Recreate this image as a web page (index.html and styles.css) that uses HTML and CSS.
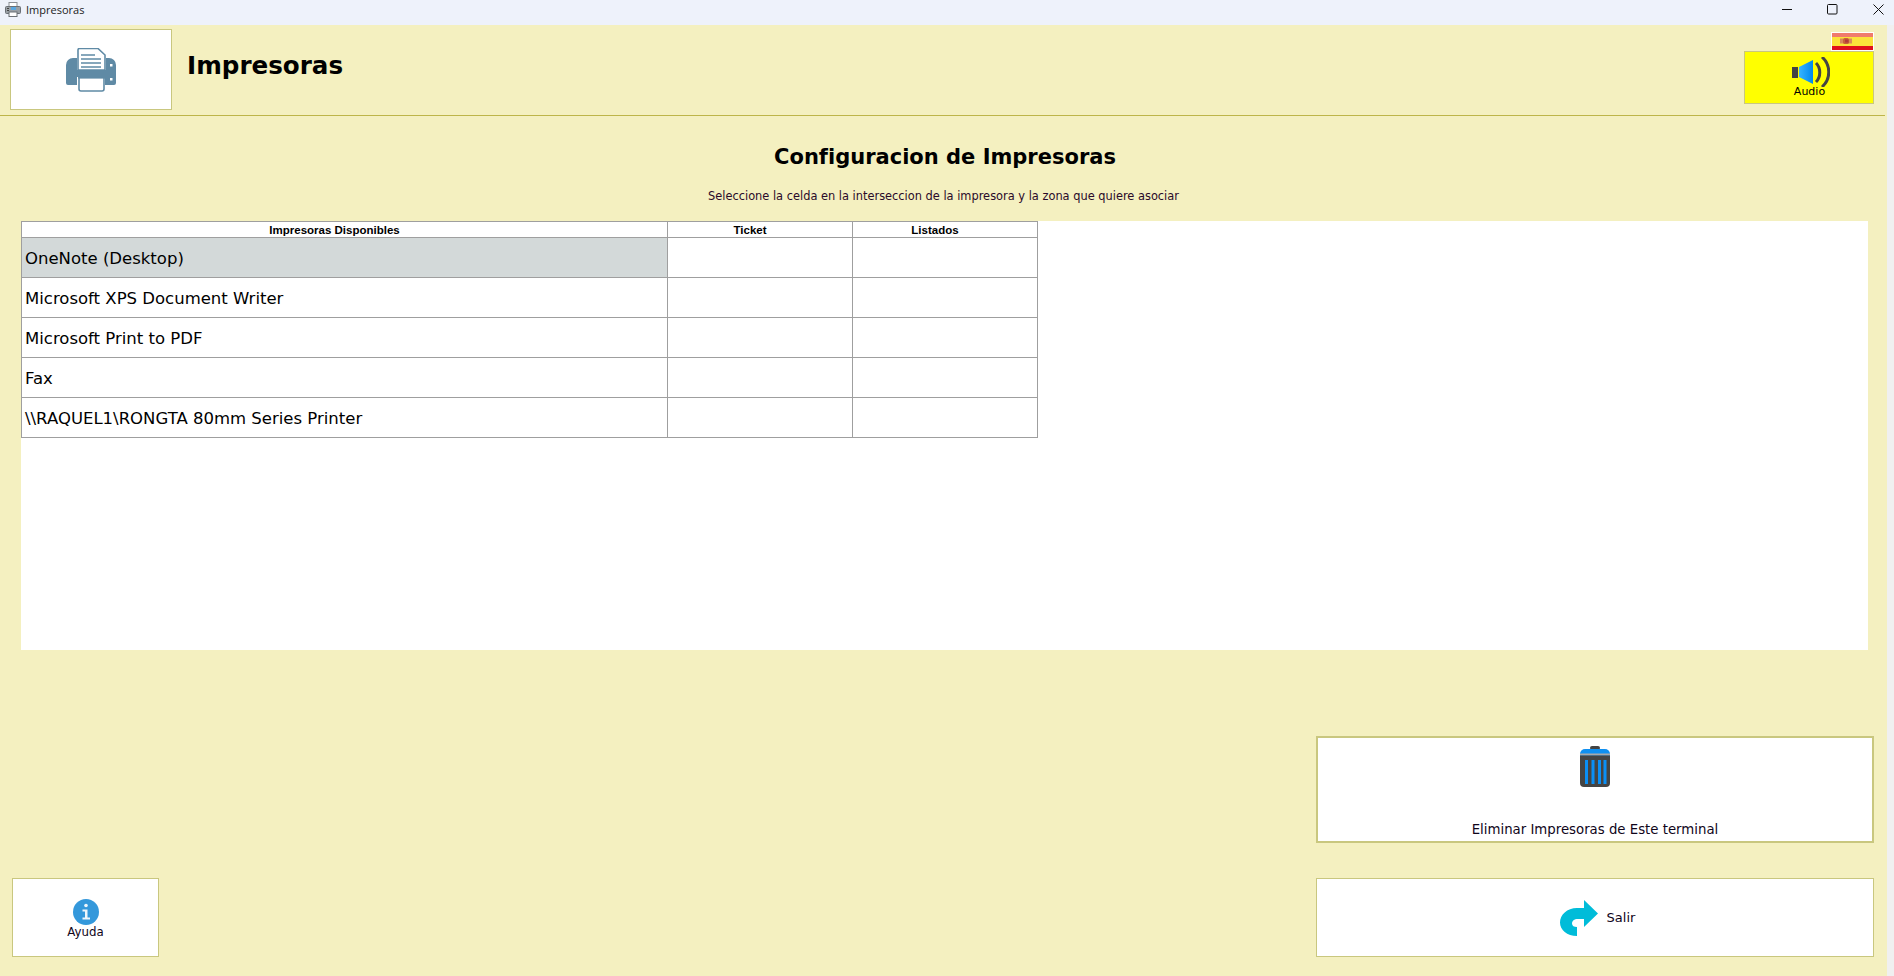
FILE: index.html
```html
<!DOCTYPE html>
<html lang="es">
<head>
<meta charset="utf-8">
<title>Impresoras</title>
<link rel="stylesheet" href="styles.css">
</head>
<body>
<div class="app">
  <div class="titlebar">
    <svg class="app-icon" viewBox="0 0 16 15" width="16" height="15">
      <rect x="4" y="0.5" width="8" height="5" fill="#fff" stroke="#8a8f96"/>
      <rect x="0.5" y="4.5" width="15" height="7" rx="1" fill="#9aa0a6" stroke="#6b7076"/>
      <rect x="6" y="5" width="5" height="3" fill="#5aa7e0"/>
      <rect x="2" y="6" width="2" height="1" fill="#444"/>
      <rect x="2" y="8" width="2" height="1" fill="#444"/>
      <rect x="4" y="10" width="8" height="4.5" fill="#fff" stroke="#6b7076"/>
    </svg>
    <span class="titlebar-text">Impresoras</span>
    <div class="window-controls">
      <svg class="wc wc-min" viewBox="0 0 10 10" width="10" height="10"><path d="M0 5.5h10" stroke="#111" fill="none"/></svg>
      <svg class="wc wc-max" viewBox="0 0 11 11" width="11" height="11"><rect x="0.5" y="0.5" width="9.5" height="9.5" rx="1" stroke="#111" fill="none"/></svg>
      <svg class="wc wc-close" viewBox="0 0 11 11" width="11" height="11"><path d="M0.5 0.5l10 10M10.5 0.5l-10 10" stroke="#111" fill="none"/></svg>
    </div>
  </div>

  <div class="window">
    <div class="content">
      <header class="header">
        <div class="logo-box">
          <svg viewBox="0 0 50 44" width="50" height="44">
            <path d="M7 10h4v12h29V10h3a7 7 0 0 1 7 7v18a2 2 0 0 1-2 2h-9v-8H11v8H2a2 2 0 0 1-2-2V17a7 7 0 0 1 7-7z" fill="#5f8aa5"/>
            <path d="M12 22V2a1.500 1.500 0 0 1 1.500-1.500H32L39 7v15z" fill="#fff" stroke="#5f8aa5" stroke-width="1.600"/>
            <path d="M15 7h14M15 11h20M15 15h20M15 19h20" stroke="#5f8aa5" stroke-width="1.300" fill="none"/>
            <path d="M13 30v11a2 2 0 0 0 2 2h21a2 2 0 0 0 2-2V30" fill="#fff" stroke="#5f8aa5" stroke-width="1.600"/>
            <rect x="12" y="29" width="27" height="1.600" fill="#5f8aa5"/>
            <rect x="44" y="16" width="2.500" height="2.500" fill="#fff"/>
            <rect x="44" y="30" width="2.500" height="2.500" fill="#fff"/>
          </svg>
        </div>
        <h1 class="page-title">Impresoras</h1>
        <div class="header-tools">
          <svg class="flag" viewBox="0 0 43 19" width="43" height="19">
            <rect width="43" height="19" fill="#fff"/>
            <rect x="1" y="1" width="41" height="4" fill="#f07b6c"/>
            <rect x="1" y="5" width="41" height="9" fill="#fbe33b"/>
            <rect x="1" y="14" width="41" height="4" fill="#e0101c"/>
            <rect x="9" y="6.500" width="3" height="5" fill="#d98a5a"/>
            <rect x="12" y="6" width="6" height="6" rx="1.500" fill="#c9603a"/>
            <rect x="14" y="7.500" width="3.500" height="3" fill="#b23a3a"/>
            <rect x="18" y="6.500" width="3" height="5" fill="#d98a5a"/>
          </svg>
          <button class="audio-btn" type="button">
            <svg class="audio-icon" viewBox="0 0 38 30" width="38" height="30">
              <defs>
                <linearGradient id="cone" x1="0" x2="1" y1="0" y2="0">
                  <stop offset="0" stop-color="#37b4ff"/>
                  <stop offset="1" stop-color="#0088ee"/>
                </linearGradient>
              </defs>
              <rect x="0" y="10" width="6" height="11" fill="#444"/>
              <path d="M7 10L21 3v24L7 20z" fill="url(#cone)"/>
              <path d="M24 6c5 5 5 14 0 19" stroke="#444" stroke-width="3" fill="none"/>
              <path d="M30 0c9 8 9 22 0 30" stroke="#444" stroke-width="3" fill="none"/>
            </svg>
            <span class="audio-label">Audio</span>
          </button>
        </div>
      </header>

      <main class="main">
        <h2 class="section-title">Configuracion de Impresoras</h2>
        <p class="section-hint">Seleccione la celda en la interseccion de la impresora y la zona que quiere asociar</p>

        <div class="grid-area">
          <table class="grid">
            <colgroup>
              <col class="col-name">
              <col class="col-zone">
              <col class="col-zone">
            </colgroup>
            <thead>
              <tr><th>Impresoras Disponibles</th><th>Ticket</th><th>Listados</th></tr>
            </thead>
            <tbody>
              <tr><td class="name selected">OneNote (Desktop)</td><td></td><td></td></tr>
              <tr><td class="name">Microsoft XPS Document Writer</td><td></td><td></td></tr>
              <tr><td class="name">Microsoft Print to PDF</td><td></td><td></td></tr>
              <tr><td class="name">Fax</td><td></td><td></td></tr>
              <tr><td class="name">\\RAQUEL1\RONGTA 80mm Series Printer</td><td></td><td></td></tr>
            </tbody>
          </table>
        </div>

        <div class="delete-row">
          <button class="btn btn-delete" type="button">
            <svg class="trash-icon" viewBox="0 0 30 42" width="30" height="42">
              <rect x="10" y="0" width="10" height="4" rx="2" fill="#444"/>
              <path d="M0 8a5 5 0 0 1 5-5h20a5 5 0 0 1 5 5v2H0z" fill="#0f8ff0"/>
              <rect x="0" y="8" width="30" height="2" fill="#0f8ff0"/>
              <rect x="0" y="7.500" width="30" height="2" fill="#a9a9a9"/>
              <path d="M0 9.500h30V37a4 4 0 0 1-4 4H4a4 4 0 0 1-4-4z" fill="#444"/>
              <path d="M5 14h3v24H5zM11.500 14h3v24h-3zM18 14h3v24h-3zM23.500 14h3v24h-3z" fill="#0a8ff5"/>
            </svg>
            <span class="btn-label">Eliminar Impresoras de Este terminal</span>
          </button>
        </div>

        <div class="footer-row">
          <button class="btn btn-help" type="button">
            <svg viewBox="0 0 26 26" width="26" height="26">
              <circle cx="13" cy="13" r="13" fill="#3498db"/>
              <circle cx="13" cy="6.500" r="1.800" fill="#eef6fb"/>
              <path d="M9.500 10.500h5v8h2.500v2H9.500v-2H12v-6H9.500z" fill="#eef6fb"/>
            </svg>
            <span class="btn-label">Ayuda</span>
          </button>
          <button class="btn btn-exit" type="button">
            <svg viewBox="0 0 38 36" width="38" height="36">
              <path d="M24 0l14 13.500L24 27v-8h-6c-4 0-6 2-6 4.500s2 3.500 5 3.500V36C7 36 0 30 0 22.500S7 8 17 8h7z" fill="#00bcd9"/>
            </svg>
            <span class="btn-label">Salir</span>
          </button>
        </div>
      </main>
    </div>
    <div class="edge"></div>
  </div>
</div>
</body>
</html>
```

FILE: styles.css
```css
* { box-sizing: border-box; }
html, body { margin: 0; padding: 0; height: 100%; overflow: hidden; }
body { font-family: "DejaVu Sans", sans-serif; color: #000; background: #f4f0c0; }
button { font: inherit; color: inherit; cursor: pointer; padding: 0; }

.app { width: 1894px; height: 976px; display: flex; flex-direction: column; }

.titlebar { height: 25px; background: #eef2fb; display: flex; align-items: flex-start; padding-left: 5px; }
.app-icon { margin-top: 2px; }
.titlebar-text { margin-left: 5px; margin-top: 2px; font: 11px/16px "Open Sans", sans-serif; color: #222; }
.window-controls { margin-left: auto; display: flex; align-items: flex-start; padding-top: 4px; padding-right: 10px; }
.wc { display: block; }
.wc-max { margin-left: 35px; }
.wc-close { margin-left: 35px; }

.window { flex: 1; display: flex; min-height: 0; }
.content { flex: 1; min-width: 0; display: flex; flex-direction: column; }
.edge { width: 7px; background: #f0f0f0; }

.header { height: 91px; margin-right: 2px; padding: 4px 11px 0 10px; border-bottom: 1px solid #bdb54a; display: flex; align-items: flex-start; }
.logo-box { width: 162px; height: 81px; background: #fff; border: 1px solid #c9c77f; display: flex; align-items: center; justify-content: center; }
.page-title { margin: 0 0 0 15px; font-size: 24.600px; line-height: 74px; font-weight: 700; }
.header-tools { margin-left: auto; margin-top: 3px; display: flex; flex-direction: column; align-items: flex-end; }
.flag { display: block; }
.audio-btn { width: 130px; height: 53px; background: #ffff00; border: 1px solid #c9c77f; display: flex; flex-direction: column; align-items: center; padding-top: 5px; padding-left: 1px; }
.audio-icon { display: block; margin-left: 2px; }
.audio-label { font-size: 11px; line-height: 13px; margin-top: -2px; }

.main { flex: 1; display: flex; flex-direction: column; }
.section-title { margin: 27px 0 0; font-size: 21px; line-height: 28px; font-weight: 700; text-align: center; padding-left: 3px; }
.section-hint { margin: 18px 0 0; font-size: 11.400px; line-height: 14px; text-align: center; color: #2a0a2a; }

.grid-area { margin: 18px 19px 0 21px; height: 429px; background: #fff; }
.grid { border-collapse: collapse; table-layout: fixed; width: 1016px; background: #fff; }
.col-name { width: 646px; }
.col-zone { width: 185px; }
.grid th, .grid td { border: 1px solid #9f9f9f; padding: 0; }
.grid th { height: 16px; font: 700 11.500px/14px "Liberation Sans", sans-serif; text-align: center; padding-right: 20px; }
.grid td { height: 40px; }
.grid td.name { font-size: 16.500px; padding: 2px 0 0 3px; }
.grid td.selected { background: #d3d9d9; }

.btn { background: #fff; border: 1px solid #c9c77f; }
.btn-label { font-size: 13px; line-height: 14px; color: #10051a; }

.delete-row { margin: 86px 13px 0 0; display: flex; justify-content: flex-end; }
.btn-delete { width: 558px; height: 107px; border-width: 2px; display: flex; flex-direction: column; align-items: center; padding-top: 8px; }
.btn-delete .btn-label { margin-top: 35px; font-size: 13.300px; }
.trash-icon { display: block; }

.footer-row { margin: 35px 13px 0 12px; display: flex; justify-content: space-between; align-items: flex-start; }
.btn-help { width: 147px; height: 79px; display: flex; flex-direction: column; align-items: center; padding-top: 20px; }
.btn-help .btn-label { margin-top: 0; font-size: 11.800px; }
.btn-exit { width: 558px; height: 79px; display: flex; align-items: center; justify-content: center; gap: 9px; padding-left: 5px; }
```
